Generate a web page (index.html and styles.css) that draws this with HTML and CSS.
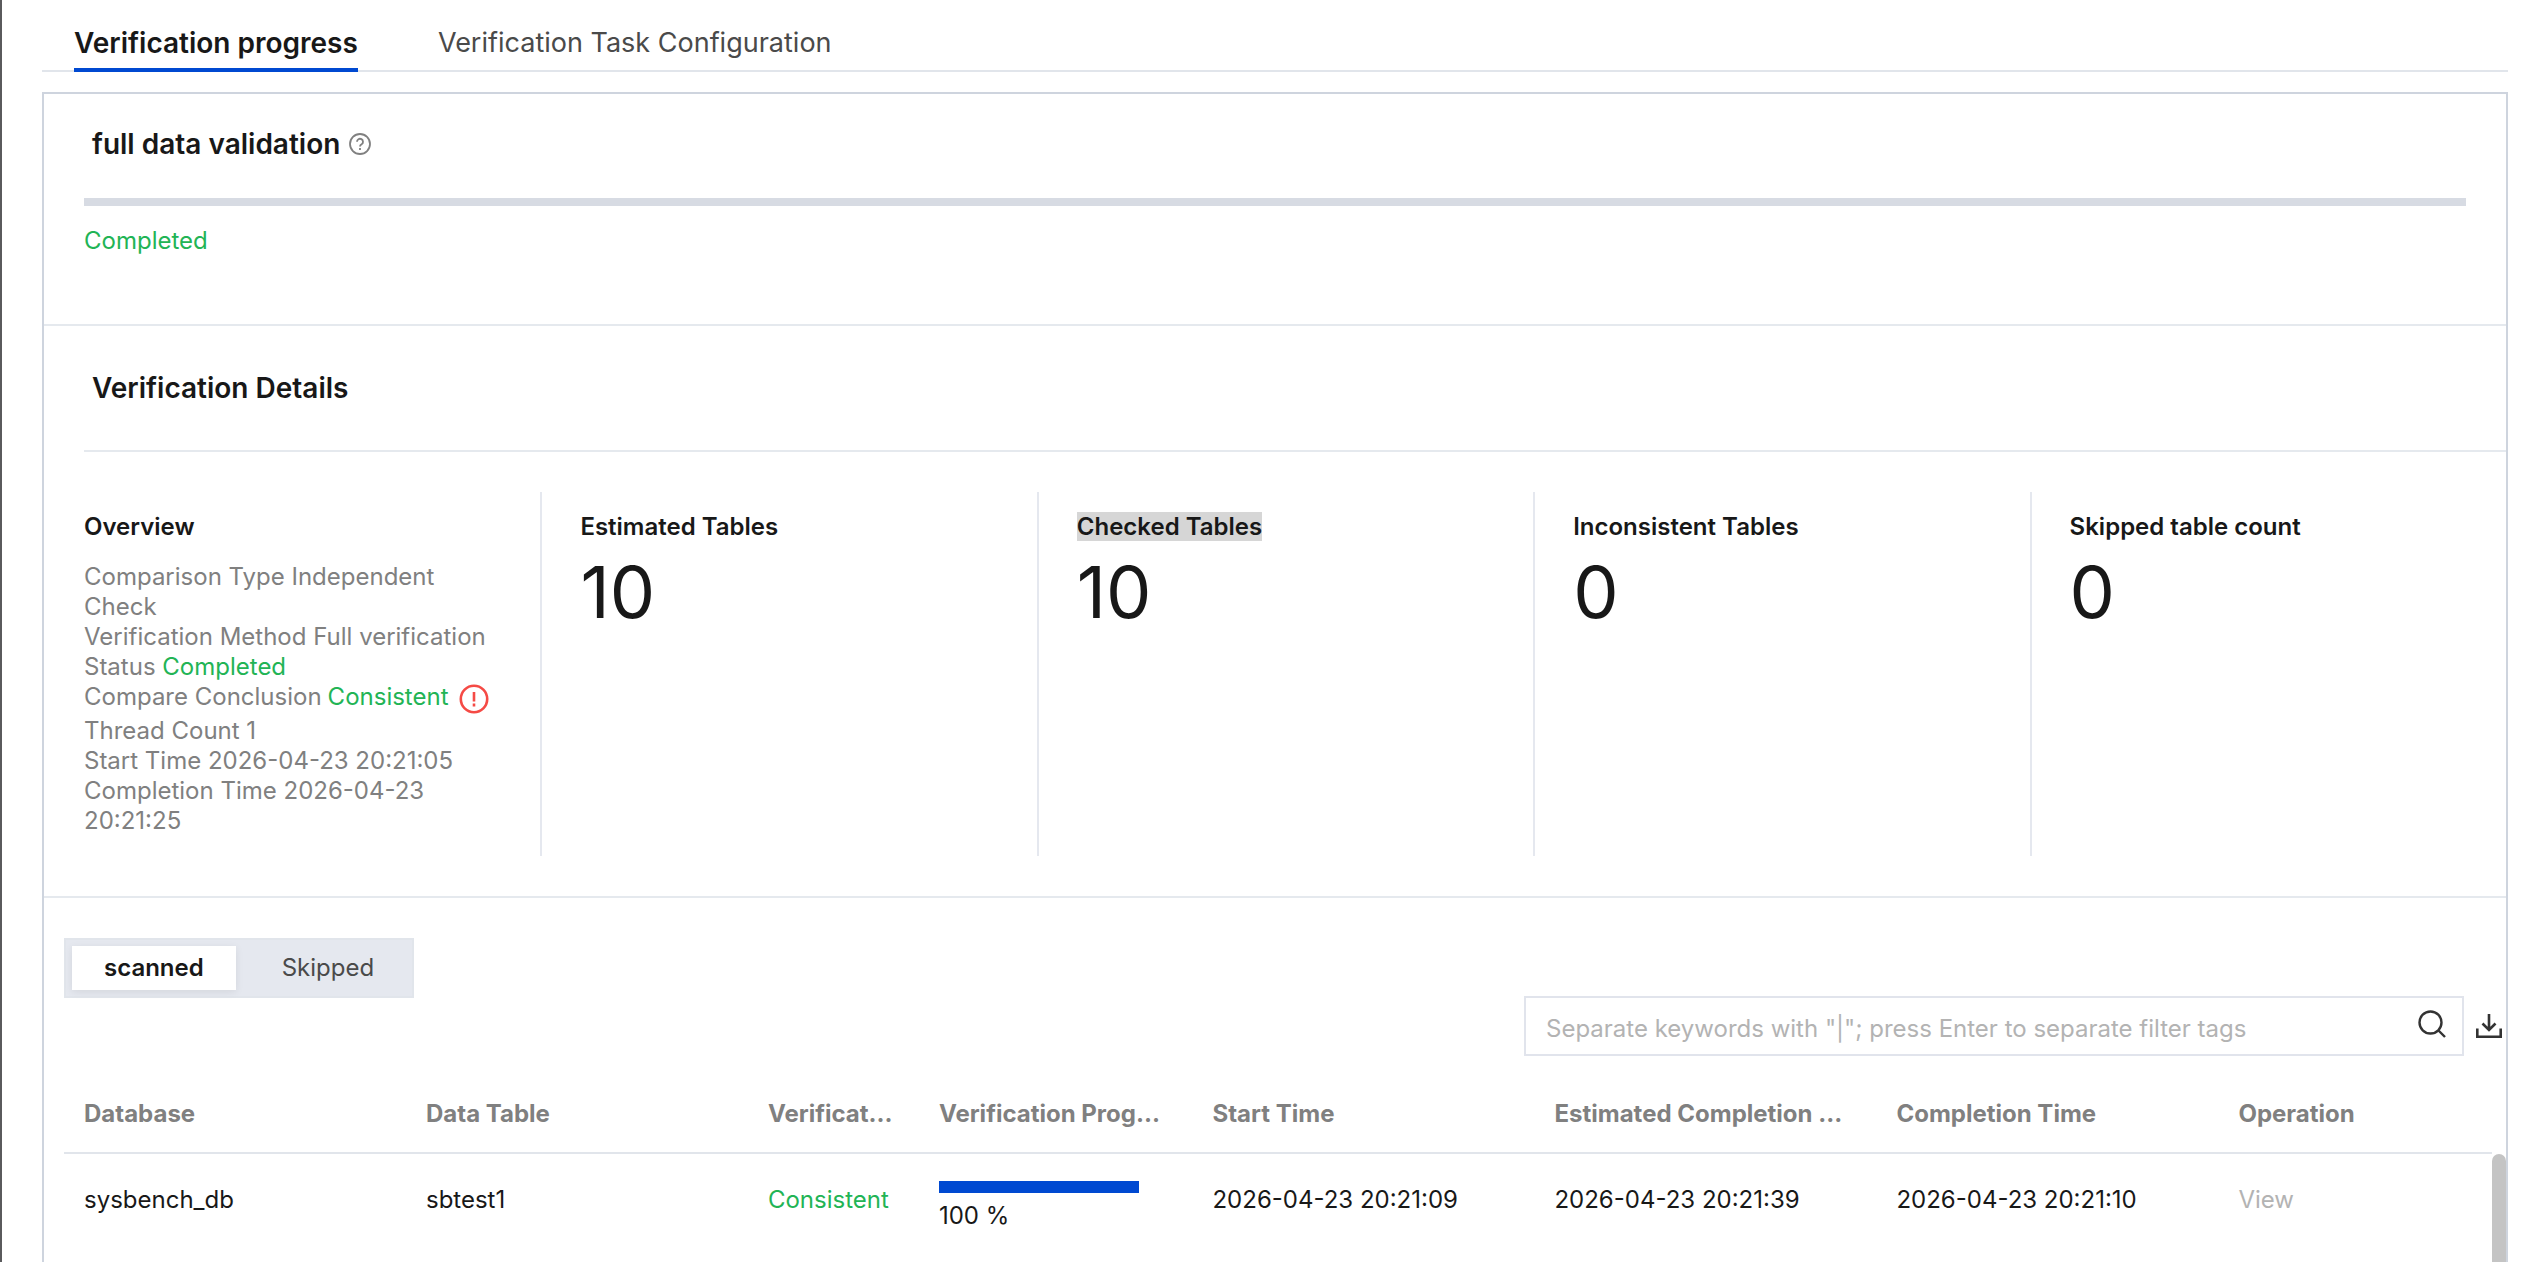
FILE: index.html
```html
<!DOCTYPE html>
<html lang="en">
<head>
  <meta charset="UTF-8">
  <meta name="viewport" content="width=device-width, initial-scale=1.0">
  <title>Verification progress</title>
  <link rel="stylesheet" href="styles.css">
</head>
<body>
  <div class="drawer-handle"></div>

  <nav class="tabs">
    <a href="#" class="tab active">Verification progress</a>
    <a href="#" class="tab">Verification Task Configuration</a>
  </nav>

  <main class="panel">
    <section class="validation">
      <h2 class="section-title">
        full data validation
        <svg class="help-icon" viewBox="0 0 24 24" fill="none" stroke="currentColor" stroke-width="1.8">
          <circle cx="12" cy="12" r="10"/>
          <path d="M9 9.8a3 3 0 1 1 4.6 2.5c-1 .6-1.6 1.1-1.6 2.2"/>
          <path d="M12 16v2"/>
        </svg>
      </h2>
      <div class="progress-track"></div>
      <p class="success">Completed</p>
    </section>

    <section class="details">
      <h2 class="section-title">Verification Details</h2>
      <div class="stats">
        <div class="stat">
          <h3>Overview</h3>
          <ul class="overview-list">
            <li>Comparison Type Independent Check</li>
            <li>Verification Method Full verification</li>
            <li>Status <span class="success">Completed</span></li>
            <li class="conclusion">
              Compare Conclusion <span class="success">Consistent</span>
              <svg class="alert-icon" viewBox="0 0 30 30" fill="none" stroke="currentColor" stroke-width="2.6">
                <circle cx="15" cy="15" r="13.2"/>
                <path d="M15 8v9.5M15 19.5v3"/>
              </svg>
            </li>
            <li>Thread Count 1</li>
            <li>Start Time 2026-04-23 20:21:05</li>
            <li>Completion Time 2026-04-23 20:21:25</li>
          </ul>
        </div>
        <div class="stat">
          <h3>Estimated Tables</h3>
          <p class="stat-number">10</p>
        </div>
        <div class="stat">
          <h3><span class="selected-text">Checked Tables</span></h3>
          <p class="stat-number">10</p>
        </div>
        <div class="stat">
          <h3>Inconsistent Tables</h3>
          <p class="stat-number">0</p>
        </div>
        <div class="stat">
          <h3>Skipped table count</h3>
          <p class="stat-number">0</p>
        </div>
      </div>
    </section>

    <section class="results">
      <div class="segmented">
        <button type="button" class="segment active">scanned</button>
        <button type="button" class="segment">Skipped</button>
      </div>

      <div class="toolbar">
        <div class="search-box">
          <input type="text" class="search-input" aria-label="Filter tables" placeholder='Separate keywords with "|"; press Enter to separate filter tags'>
          <button type="button" class="icon-btn search-btn" aria-label="Search">
            <svg width="28" height="28" viewBox="0 0 28 28" fill="none" stroke="currentColor" stroke-width="2.4">
              <circle cx="12.5" cy="12.5" r="11"/>
              <path d="M20.5 20.5l6.5 6.5"/>
            </svg>
          </button>
        </div>
        <button type="button" class="icon-btn" aria-label="Download">
          <svg width="26" height="26" viewBox="0 0 26 26" fill="none" stroke="currentColor" stroke-width="2.6">
            <path d="M13 1v16M6.5 10.5L13 17l6.5-6.5"/>
            <path d="M1.3 15.5v8.2h23.4v-8.2"/>
          </svg>
        </button>
      </div>

      <div class="table-wrap">
        <table>
          <colgroup>
            <col class="col-wide">
            <col class="col-wide">
            <col class="col-narrow">
            <col class="col-medium">
            <col class="col-wide">
            <col class="col-wide">
            <col class="col-wide">
            <col class="col-medium">
          </colgroup>
          <thead>
            <tr>
              <th>Database</th>
              <th>Data Table</th>
              <th>Verificat...</th>
              <th>Verification Prog...</th>
              <th>Start Time</th>
              <th>Estimated Completion ...</th>
              <th>Completion Time</th>
              <th>Operation</th>
            </tr>
          </thead>
          <tbody>
            <tr>
              <td>sysbench_db</td>
              <td>sbtest1</td>
              <td><span class="success">Consistent</span></td>
              <td class="progress-cell">
                <div class="row-progress"></div>
                <div>100 %</div>
              </td>
              <td>2026-04-23 20:21:09</td>
              <td>2026-04-23 20:21:39</td>
              <td>2026-04-23 20:21:10</td>
              <td><a href="#" class="view-link">View</a></td>
            </tr>
          </tbody>
        </table>
        <div class="scrollbar"></div>
      </div>
    </section>
  </main>
</body>
</html>
```
FILE: styles.css
```css
* {
  margin: 0;
  padding: 0;
  box-sizing: border-box;
}

body {
  position: relative;
  font-family: Inter, "Liberation Sans", sans-serif;
  font-size: 24px;
  line-height: 30px;
  color: #181818;
  background: #fff;
  height: 100vh;
  overflow: hidden;
  display: flex;
  flex-direction: column;
  padding: 0 16px 0 40px;
  border-left: 2px solid #5a5a5c;
}

a {
  color: inherit;
  text-decoration: none;
}

button,
input {
  font: inherit;
  color: inherit;
  background: none;
  border: none;
  outline: none;
}

.success {
  color: #22b455;
}

/* three small marks on the drawer edge */
.drawer-handle {
  position: absolute;
  top: 106px;
  left: -2px;
  width: 2px;
  height: 14px;
  background: repeating-linear-gradient(#000 0 2px, #5a5a5c 2px 6px);
}

/* tabs */
.tabs {
  display: flex;
  gap: 80px;
  padding: 14px 32px 0;
  border-bottom: 2px solid #e1e5eb;
  font-size: 27px;
}

.tab {
  height: 58px;
  padding-top: 14px;
  margin-bottom: -2px;
  color: #4a4a4a;
}

.tab.active {
  color: #181818;
  font-size: 28px;
  font-weight: 600;
  border-bottom: 4px solid #0049d1;
}

/* panel */
.panel {
  flex: 1;
  margin-top: 20px;
  border: 2px solid #ced4de;
  border-bottom: none;
  overflow: hidden;
}

.section-title {
  display: flex;
  align-items: center;
  gap: 8px;
  padding-left: 8px;
  font-size: 28px;
  font-weight: 600;
  line-height: 40px;
}

.help-icon {
  width: 24px;
  height: 24px;
  color: #808080;
}

.validation {
  height: 232px;
  padding: 30px 40px 0;
  border-bottom: 2px solid #e5e9ee;
}

.progress-track {
  height: 8px;
  margin: 34px 0 20px;
  background: #d7dbe3;
}

.details {
  padding: 42px 0 40px;
  border-bottom: 2px solid #e5e9ee;
}

.details .section-title {
  margin-left: 40px;
  padding-bottom: 42px;
  border-bottom: 2px solid #e5e9ee;
}

/* the last column runs slightly past the panel edge */
.stats {
  display: grid;
  grid-template-columns: repeat(5, 1fr);
  min-height: 364px;
  margin: 40px -20px 0 0;
}

.stat {
  padding: 20px 38px;
  border-left: 2px solid #e5e8ef;
}

.stat:first-child {
  border-left-color: transparent;
}

.stat h3 {
  font-size: 24px;
  font-weight: 600;
  line-height: 30px;
}

.selected-text {
  background: #d6d6d6;
}

.stat-number {
  margin-top: 12px;
  font-size: 72px;
  line-height: 76px;
}

.overview-list {
  margin-top: 20px;
  list-style: none;
  color: #808080;
}

.conclusion {
  display: flex;
  align-items: flex-start;
  gap: 6px;
  height: 34px;
  white-space: nowrap;
}

.alert-icon {
  width: 30px;
  height: 30px;
  margin: 2px 0 0 4px;
  color: #f54a45;
}

/* results */
.results {
  padding: 40px 0 0 20px;
}

.segmented {
  display: inline-flex;
  height: 60px;
  padding: 6px;
  background: #e5e8ef;
  border: 2px solid #e1e5eb;
  vertical-align: top;
}

.segment {
  height: 44px;
  padding: 0 32px;
  color: #4a4a4a;
}

.segment.active {
  margin-right: 14px;
  color: #181818;
  font-weight: 600;
  background: #fff;
  box-shadow: 0 2px 8px rgba(0, 0, 0, 0.08);
}

.toolbar {
  display: flex;
  justify-content: flex-end;
  align-items: center;
  gap: 12px;
  margin-top: -2px;
  padding-right: 4px;
}

.search-box {
  display: flex;
  align-items: center;
  width: 940px;
  height: 60px;
  padding: 0 16px 0 20px;
  border: 2px solid #e1e4ec;
}

.search-input {
  flex: 1;
  height: 56px;
  padding-top: 4px;
}

.search-input::placeholder {
  color: #b3b3b3;
}

.icon-btn {
  display: flex;
  color: #333;
}

.search-btn {
  padding-bottom: 4px;
}

.table-wrap {
  display: flex;
  align-items: flex-start;
  margin-top: 20px;
}

table {
  flex: 1;
  width: 100%;
  table-layout: fixed;
  border-spacing: 0;
  text-align: left;
}

.col-wide {
  width: 340px;
}

.col-medium {
  width: 272px;
}

.col-narrow {
  width: 170px;
}

th,
td {
  padding: 0 20px;
  white-space: nowrap;
}

th {
  height: 78px;
  color: #808080;
  font-weight: 700;
  border-bottom: 2px solid #e1e5eb;
}

td {
  height: 92px;
}

.progress-cell {
  padding-top: 12px;
}

.row-progress {
  width: 200px;
  height: 12px;
  margin-bottom: 8px;
  background: #0049d1;
}

.view-link {
  color: #b3b3b3;
}

.scrollbar {
  flex: none;
  width: 14px;
  height: 300px;
  margin-top: 78px;
  border-radius: 7px;
  background: #c4c4c4;
}
```
